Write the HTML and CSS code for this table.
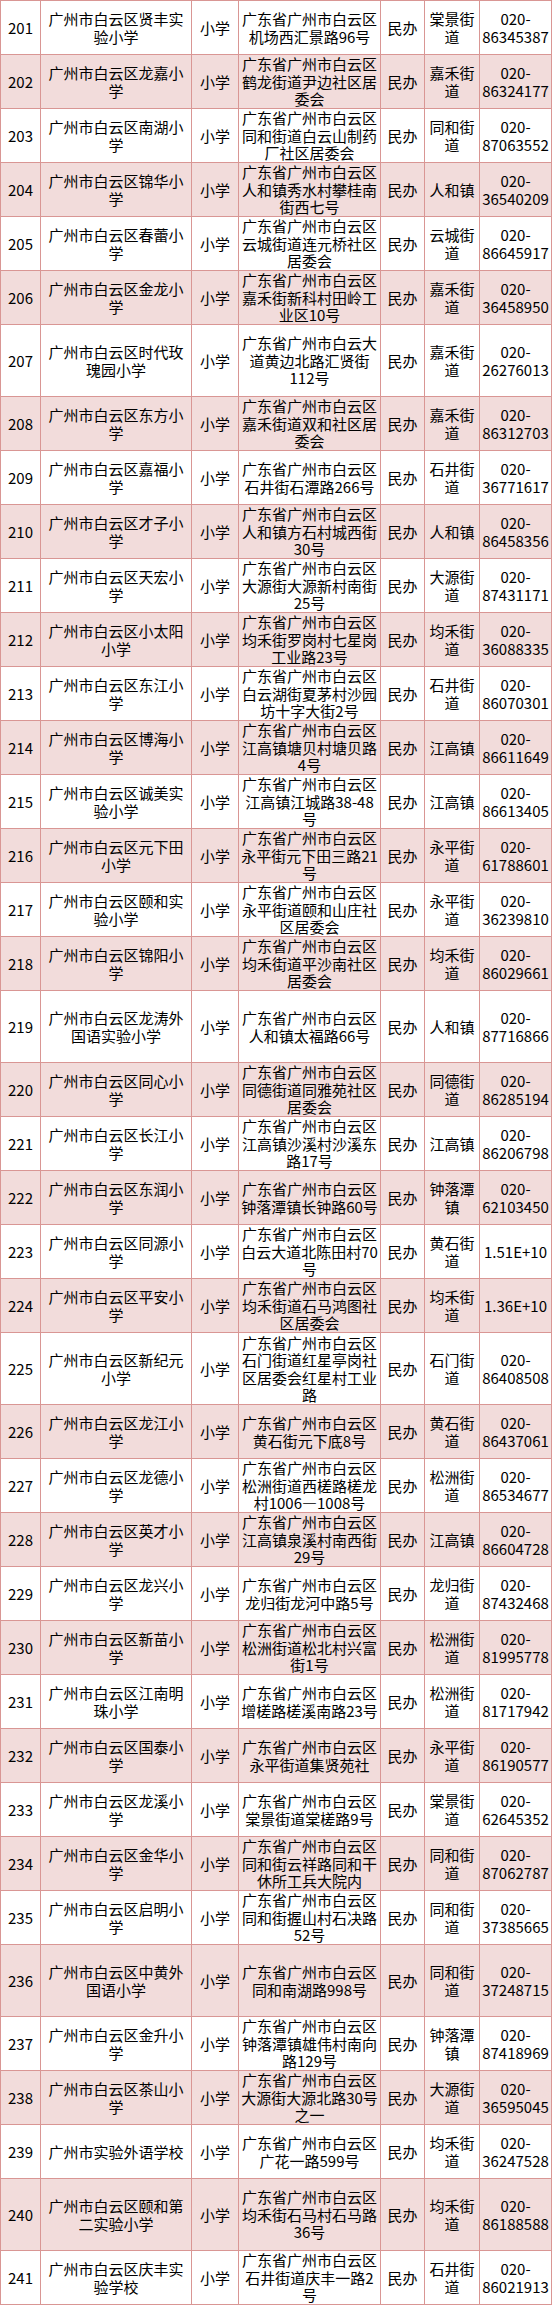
FILE: index.html
```html
<!DOCTYPE html>
<html lang="zh-CN">
<head>
<meta charset="utf-8">
<title>广州市白云区民办小学</title>
<link rel="stylesheet" href="styles.css">
</head>
<body>
<div class="sheet">
  <div class="row"><div class="c">201</div><div class="c">广州市白云区贤丰实验小学</div><div class="c">小学</div><div class="c">广东省广州市白云区机场西汇景路96号</div><div class="c">民办</div><div class="c">棠景街道</div><div class="c">020-<wbr>86345387</div></div>
  <div class="row"><div class="c">202</div><div class="c">广州市白云区龙嘉小学</div><div class="c">小学</div><div class="c">广东省广州市白云区鹤龙街道尹边社区居委会</div><div class="c">民办</div><div class="c">嘉禾街道</div><div class="c">020-<wbr>86324177</div></div>
  <div class="row"><div class="c">203</div><div class="c">广州市白云区南湖小学</div><div class="c">小学</div><div class="c">广东省广州市白云区同和街道白云山制药厂社区居委会</div><div class="c">民办</div><div class="c">同和街道</div><div class="c">020-<wbr>87063552</div></div>
  <div class="row"><div class="c">204</div><div class="c">广州市白云区锦华小学</div><div class="c">小学</div><div class="c">广东省广州市白云区人和镇秀水村攀桂南街西七号</div><div class="c">民办</div><div class="c">人和镇</div><div class="c">020-<wbr>36540209</div></div>
  <div class="row"><div class="c">205</div><div class="c">广州市白云区春蕾小学</div><div class="c">小学</div><div class="c">广东省广州市白云区云城街道连元桥社区居委会</div><div class="c">民办</div><div class="c">云城街道</div><div class="c">020-<wbr>86645917</div></div>
  <div class="row"><div class="c">206</div><div class="c">广州市白云区金龙小学</div><div class="c">小学</div><div class="c">广东省广州市白云区嘉禾街新科村田岭工业区10号</div><div class="c">民办</div><div class="c">嘉禾街道</div><div class="c">020-<wbr>36458950</div></div>
  <div class="row tall"><div class="c">207</div><div class="c">广州市白云区时代玫瑰园小学</div><div class="c">小学</div><div class="c">广东省广州市白云大道黄边北路汇贤街112号</div><div class="c">民办</div><div class="c">嘉禾街道</div><div class="c">020-<wbr>26276013</div></div>
  <div class="row"><div class="c">208</div><div class="c">广州市白云区东方小学</div><div class="c">小学</div><div class="c">广东省广州市白云区嘉禾街道双和社区居委会</div><div class="c">民办</div><div class="c">嘉禾街道</div><div class="c">020-<wbr>86312703</div></div>
  <div class="row"><div class="c">209</div><div class="c">广州市白云区嘉福小学</div><div class="c">小学</div><div class="c">广东省广州市白云区石井街石潭路266号</div><div class="c">民办</div><div class="c">石井街道</div><div class="c">020-<wbr>36771617</div></div>
  <div class="row"><div class="c">210</div><div class="c">广州市白云区才子小学</div><div class="c">小学</div><div class="c">广东省广州市白云区人和镇方石村城西街30号</div><div class="c">民办</div><div class="c">人和镇</div><div class="c">020-<wbr>86458356</div></div>
  <div class="row"><div class="c">211</div><div class="c">广州市白云区天宏小学</div><div class="c">小学</div><div class="c">广东省广州市白云区大源街大源新村南街25号</div><div class="c">民办</div><div class="c">大源街道</div><div class="c">020-<wbr>87431171</div></div>
  <div class="row"><div class="c">212</div><div class="c">广州市白云区小太阳小学</div><div class="c">小学</div><div class="c">广东省广州市白云区均禾街罗岗村七星岗工业路23号</div><div class="c">民办</div><div class="c">均禾街道</div><div class="c">020-<wbr>36088335</div></div>
  <div class="row"><div class="c">213</div><div class="c">广州市白云区东江小学</div><div class="c">小学</div><div class="c">广东省广州市白云区白云湖街夏茅村沙园坊十字大街2号</div><div class="c">民办</div><div class="c">石井街道</div><div class="c">020-<wbr>86070301</div></div>
  <div class="row"><div class="c">214</div><div class="c">广州市白云区博海小学</div><div class="c">小学</div><div class="c">广东省广州市白云区江高镇塘贝村塘贝路4号</div><div class="c">民办</div><div class="c">江高镇</div><div class="c">020-<wbr>86611649</div></div>
  <div class="row"><div class="c">215</div><div class="c">广州市白云区诚美实验小学</div><div class="c">小学</div><div class="c">广东省广州市白云区江高镇江城路38-48号</div><div class="c">民办</div><div class="c">江高镇</div><div class="c">020-<wbr>86613405</div></div>
  <div class="row"><div class="c">216</div><div class="c">广州市白云区元下田小学</div><div class="c">小学</div><div class="c">广东省广州市白云区永平街元下田三路21号</div><div class="c">民办</div><div class="c">永平街道</div><div class="c">020-<wbr>61788601</div></div>
  <div class="row"><div class="c">217</div><div class="c">广州市白云区颐和实验小学</div><div class="c">小学</div><div class="c">广东省广州市白云区永平街道颐和山庄社区居委会</div><div class="c">民办</div><div class="c">永平街道</div><div class="c">020-<wbr>36239810</div></div>
  <div class="row"><div class="c">218</div><div class="c">广州市白云区锦阳小学</div><div class="c">小学</div><div class="c">广东省广州市白云区均禾街道平沙南社区居委会</div><div class="c">民办</div><div class="c">均禾街道</div><div class="c">020-<wbr>86029661</div></div>
  <div class="row tall"><div class="c">219</div><div class="c">广州市白云区龙涛外国语实验小学</div><div class="c">小学</div><div class="c">广东省广州市白云区人和镇太福路66号</div><div class="c">民办</div><div class="c">人和镇</div><div class="c">020-<wbr>87716866</div></div>
  <div class="row"><div class="c">220</div><div class="c">广州市白云区同心小学</div><div class="c">小学</div><div class="c">广东省广州市白云区同德街道同雅苑社区居委会</div><div class="c">民办</div><div class="c">同德街道</div><div class="c">020-<wbr>86285194</div></div>
  <div class="row"><div class="c">221</div><div class="c">广州市白云区长江小学</div><div class="c">小学</div><div class="c">广东省广州市白云区江高镇沙溪村沙溪东路17号</div><div class="c">民办</div><div class="c">江高镇</div><div class="c">020-<wbr>86206798</div></div>
  <div class="row"><div class="c">222</div><div class="c">广州市白云区东润小学</div><div class="c">小学</div><div class="c">广东省广州市白云区钟落潭镇长钟路60号</div><div class="c">民办</div><div class="c">钟落潭镇</div><div class="c">020-<wbr>62103450</div></div>
  <div class="row"><div class="c">223</div><div class="c">广州市白云区同源小学</div><div class="c">小学</div><div class="c">广东省广州市白云区白云大道北陈田村70号</div><div class="c">民办</div><div class="c">黄石街道</div><div class="c">1.51E+10</div></div>
  <div class="row"><div class="c">224</div><div class="c">广州市白云区平安小学</div><div class="c">小学</div><div class="c">广东省广州市白云区均禾街道石马鸿图社区居委会</div><div class="c">民办</div><div class="c">均禾街道</div><div class="c">1.36E+10</div></div>
  <div class="row tall"><div class="c">225</div><div class="c">广州市白云区新纪元小学</div><div class="c">小学</div><div class="c">广东省广州市白云区石门街道红星亭岗社区居委会红星村工业路</div><div class="c">民办</div><div class="c">石门街道</div><div class="c">020-<wbr>86408508</div></div>
  <div class="row"><div class="c">226</div><div class="c">广州市白云区龙江小学</div><div class="c">小学</div><div class="c">广东省广州市白云区黄石街元下底8号</div><div class="c">民办</div><div class="c">黄石街道</div><div class="c">020-<wbr>86437061</div></div>
  <div class="row"><div class="c">227</div><div class="c">广州市白云区龙德小学</div><div class="c">小学</div><div class="c">广东省广州市白云区松洲街道西槎路槎龙村1006—1008号</div><div class="c">民办</div><div class="c">松洲街道</div><div class="c">020-<wbr>86534677</div></div>
  <div class="row"><div class="c">228</div><div class="c">广州市白云区英才小学</div><div class="c">小学</div><div class="c">广东省广州市白云区江高镇泉溪村南西街29号</div><div class="c">民办</div><div class="c">江高镇</div><div class="c">020-<wbr>86604728</div></div>
  <div class="row"><div class="c">229</div><div class="c">广州市白云区龙兴小学</div><div class="c">小学</div><div class="c">广东省广州市白云区龙归街龙河中路5号</div><div class="c">民办</div><div class="c">龙归街道</div><div class="c">020-<wbr>87432468</div></div>
  <div class="row"><div class="c">230</div><div class="c">广州市白云区新苗小学</div><div class="c">小学</div><div class="c">广东省广州市白云区松洲街道松北村兴富街1号</div><div class="c">民办</div><div class="c">松洲街道</div><div class="c">020-<wbr>81995778</div></div>
  <div class="row"><div class="c">231</div><div class="c">广州市白云区江南明珠小学</div><div class="c">小学</div><div class="c">广东省广州市白云区增槎路槎溪南路23号</div><div class="c">民办</div><div class="c">松洲街道</div><div class="c">020-<wbr>81717942</div></div>
  <div class="row"><div class="c">232</div><div class="c">广州市白云区国泰小学</div><div class="c">小学</div><div class="c">广东省广州市白云区永平街道集贤苑社</div><div class="c">民办</div><div class="c">永平街道</div><div class="c">020-<wbr>86190577</div></div>
  <div class="row"><div class="c">233</div><div class="c">广州市白云区龙溪小学</div><div class="c">小学</div><div class="c">广东省广州市白云区棠景街道棠槎路9号</div><div class="c">民办</div><div class="c">棠景街道</div><div class="c">020-<wbr>62645352</div></div>
  <div class="row"><div class="c">234</div><div class="c">广州市白云区金华小学</div><div class="c">小学</div><div class="c">广东省广州市白云区同和街云祥路同和干休所工兵大院内</div><div class="c">民办</div><div class="c">同和街道</div><div class="c">020-<wbr>87062787</div></div>
  <div class="row"><div class="c">235</div><div class="c">广州市白云区启明小学</div><div class="c">小学</div><div class="c">广东省广州市白云区同和街握山村石决路52号</div><div class="c">民办</div><div class="c">同和街道</div><div class="c">020-<wbr>37385665</div></div>
  <div class="row tall"><div class="c">236</div><div class="c">广州市白云区中黄外国语小学</div><div class="c">小学</div><div class="c">广东省广州市白云区同和南湖路998号</div><div class="c">民办</div><div class="c">同和街道</div><div class="c">020-<wbr>37248715</div></div>
  <div class="row"><div class="c">237</div><div class="c">广州市白云区金升小学</div><div class="c">小学</div><div class="c">广东省广州市白云区钟落潭镇雄伟村南向路129号</div><div class="c">民办</div><div class="c">钟落潭镇</div><div class="c">020-<wbr>87418969</div></div>
  <div class="row"><div class="c">238</div><div class="c">广州市白云区茶山小学</div><div class="c">小学</div><div class="c">广东省广州市白云区大源街大源北路30号之一</div><div class="c">民办</div><div class="c">大源街道</div><div class="c">020-<wbr>36595045</div></div>
  <div class="row"><div class="c">239</div><div class="c">广州市实验外语学校</div><div class="c">小学</div><div class="c">广东省广州市白云区广花一路599号</div><div class="c">民办</div><div class="c">均禾街道</div><div class="c">020-<wbr>36247528</div></div>
  <div class="row tall"><div class="c">240</div><div class="c">广州市白云区颐和第二实验小学</div><div class="c">小学</div><div class="c">广东省广州市白云区均禾街石马村石马路36号</div><div class="c">民办</div><div class="c">均禾街道</div><div class="c">020-<wbr>86188588</div></div>
  <div class="row"><div class="c">241</div><div class="c">广州市白云区庆丰实验学校</div><div class="c">小学</div><div class="c">广东省广州市白云区石井街道庆丰一路2号</div><div class="c">民办</div><div class="c">石井街道</div><div class="c">020-<wbr>86021913</div></div>
</div>
</body>
</html>
```

FILE: styles.css
```css
html, body {
  margin: 0;
  padding: 0;
  background: #ffffff;
}

.sheet {
  width: 551px;
  border-top: 1px solid #d99694;
  border-left: 1px solid #d99694;
  font-family: "Noto Sans CJK SC", "Noto Sans", sans-serif;
  font-size: 15px;
  line-height: 17.5px;
  color: #000000;
}

.row {
  display: grid;
  grid-template-columns: 40px 151px 47px 142px 44px 55px 72px;
  height: 54px;
  background: #ffffff;
}

.row:nth-child(even) {
  background: #f2dcdb;
}

.row.tall {
  height: 72px;
}

.c {
  box-sizing: border-box;
  border-right: 1px solid #d99694;
  border-bottom: 1px solid #d99694;
  display: flex;
  align-items: center;
  justify-content: center;
  text-align: center;
  padding: 0 1px;
  min-width: 0;
}
```
